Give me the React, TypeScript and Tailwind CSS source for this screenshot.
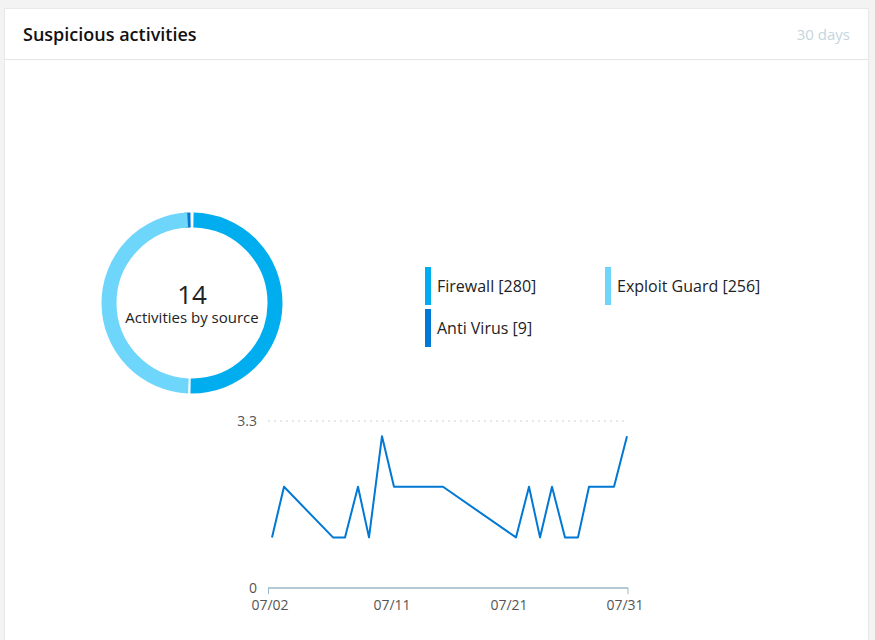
export default function App() {
  const cx = 192, cy = 303, r = 83;
  const arc = (a0: number, a1: number) => {
    const p = (a: number) => {
      const t = ((a - 90) * Math.PI) / 180;
      return `${cx + r * Math.cos(t)} ${cy + r * Math.sin(t)}`;
    };
    const large = a1 - a0 > 180 ? 1 : 0;
    return `M ${p(a0)} A ${r} ${r} 0 ${large} 1 ${p(a1)}`;
  };
  const xs = [272, 284, 333, 345, 358, 369, 382, 394, 443, 516, 529, 540, 552, 565, 578, 589, 614, 627];
  const vs = [1, 2, 1, 1, 2, 1, 3, 2, 2, 1, 2, 1, 2, 1, 1, 2, 2, 3];
  const pts = xs.map((x, i) => `${x},${588 - vs[i] * 50.6}`).join(" ");
  return (
    <div className="w-[875px] h-[640px] bg-[#f3f3f3] pt-[8px] pl-[4px] pr-[6px] overflow-hidden" style={{ fontFamily: '"Open Sans", "Liberation Sans", sans-serif' }}>
      <div className="bg-white h-[640px] border border-[#e8e8e8]">
        <div className="h-[51px] flex items-center justify-between px-[18px] border-b border-[#e5e5e5]">
          <span className="text-[18px] font-semibold text-[#111]">Suspicious activities</span>
          <span className="text-[15px] text-[#c5d5de]">30 days</span>
        </div>
        <div className="relative h-[580px]">
          <svg className="absolute left-[-5px] top-[-60px]" width="875" height="640">
            <path d={arc(-5, -1)} stroke="#0078d4" strokeWidth="15" fill="none" />
            <path d={arc(1, 181)} stroke="#00aeef" strokeWidth="15" fill="none" />
            <path d={arc(182.5, 357)} stroke="#6fd6fb" strokeWidth="15" fill="none" />
            <line x1="268" y1="421" x2="628" y2="421" stroke="#d0d0d0" strokeDasharray="2 4" />
            <line x1="268" y1="588" x2="628" y2="588" stroke="#9ab7c9" strokeWidth="1.5" />
            <line x1="268.5" y1="588" x2="268.5" y2="594" stroke="#9ab7c9" />
            <line x1="628" y1="588" x2="628" y2="594" stroke="#9ab7c9" />
            <polyline points={pts} fill="none" stroke="#0078d4" strokeWidth="2" strokeLinejoin="round" />
            <g fill="#555" fontSize="14" fontFamily='"Open Sans", sans-serif'>
              <text x="257" y="426" textAnchor="end">3.3</text>
              <text x="257" y="593" textAnchor="end">0</text>
              <text x="270" y="610" textAnchor="middle">07/02</text>
              <text x="392" y="610" textAnchor="middle">07/11</text>
              <text x="509" y="610" textAnchor="middle">07/21</text>
              <text x="625" y="610" textAnchor="middle">07/31</text>
            </g>
          </svg>
          <div className="absolute left-[102px] top-[220px] w-[170px] flex flex-col items-center text-[#222]">
            <span className="text-[26px] leading-[28px]">14</span>
            <span className="text-[15px] leading-[18px] whitespace-nowrap">Activities by source</span>
          </div>
          <div className="absolute left-[420px] top-[207px] grid grid-cols-[180px_180px] gap-y-[4px] text-[16px] text-[#222]">
            <div className="flex items-center gap-[6px] h-[38px]"><span className="w-[6px] h-[38px] bg-[#00aeef]" />Firewall [280]</div>
            <div className="flex items-center gap-[6px] h-[38px]"><span className="w-[6px] h-[38px] bg-[#6fd6fb]" />Exploit Guard [256]</div>
            <div className="flex items-center gap-[6px] h-[38px]"><span className="w-[6px] h-[38px] bg-[#0078d4]" />Anti Virus [9]</div>
          </div>
        </div>
      </div>
    </div>
  );
}
